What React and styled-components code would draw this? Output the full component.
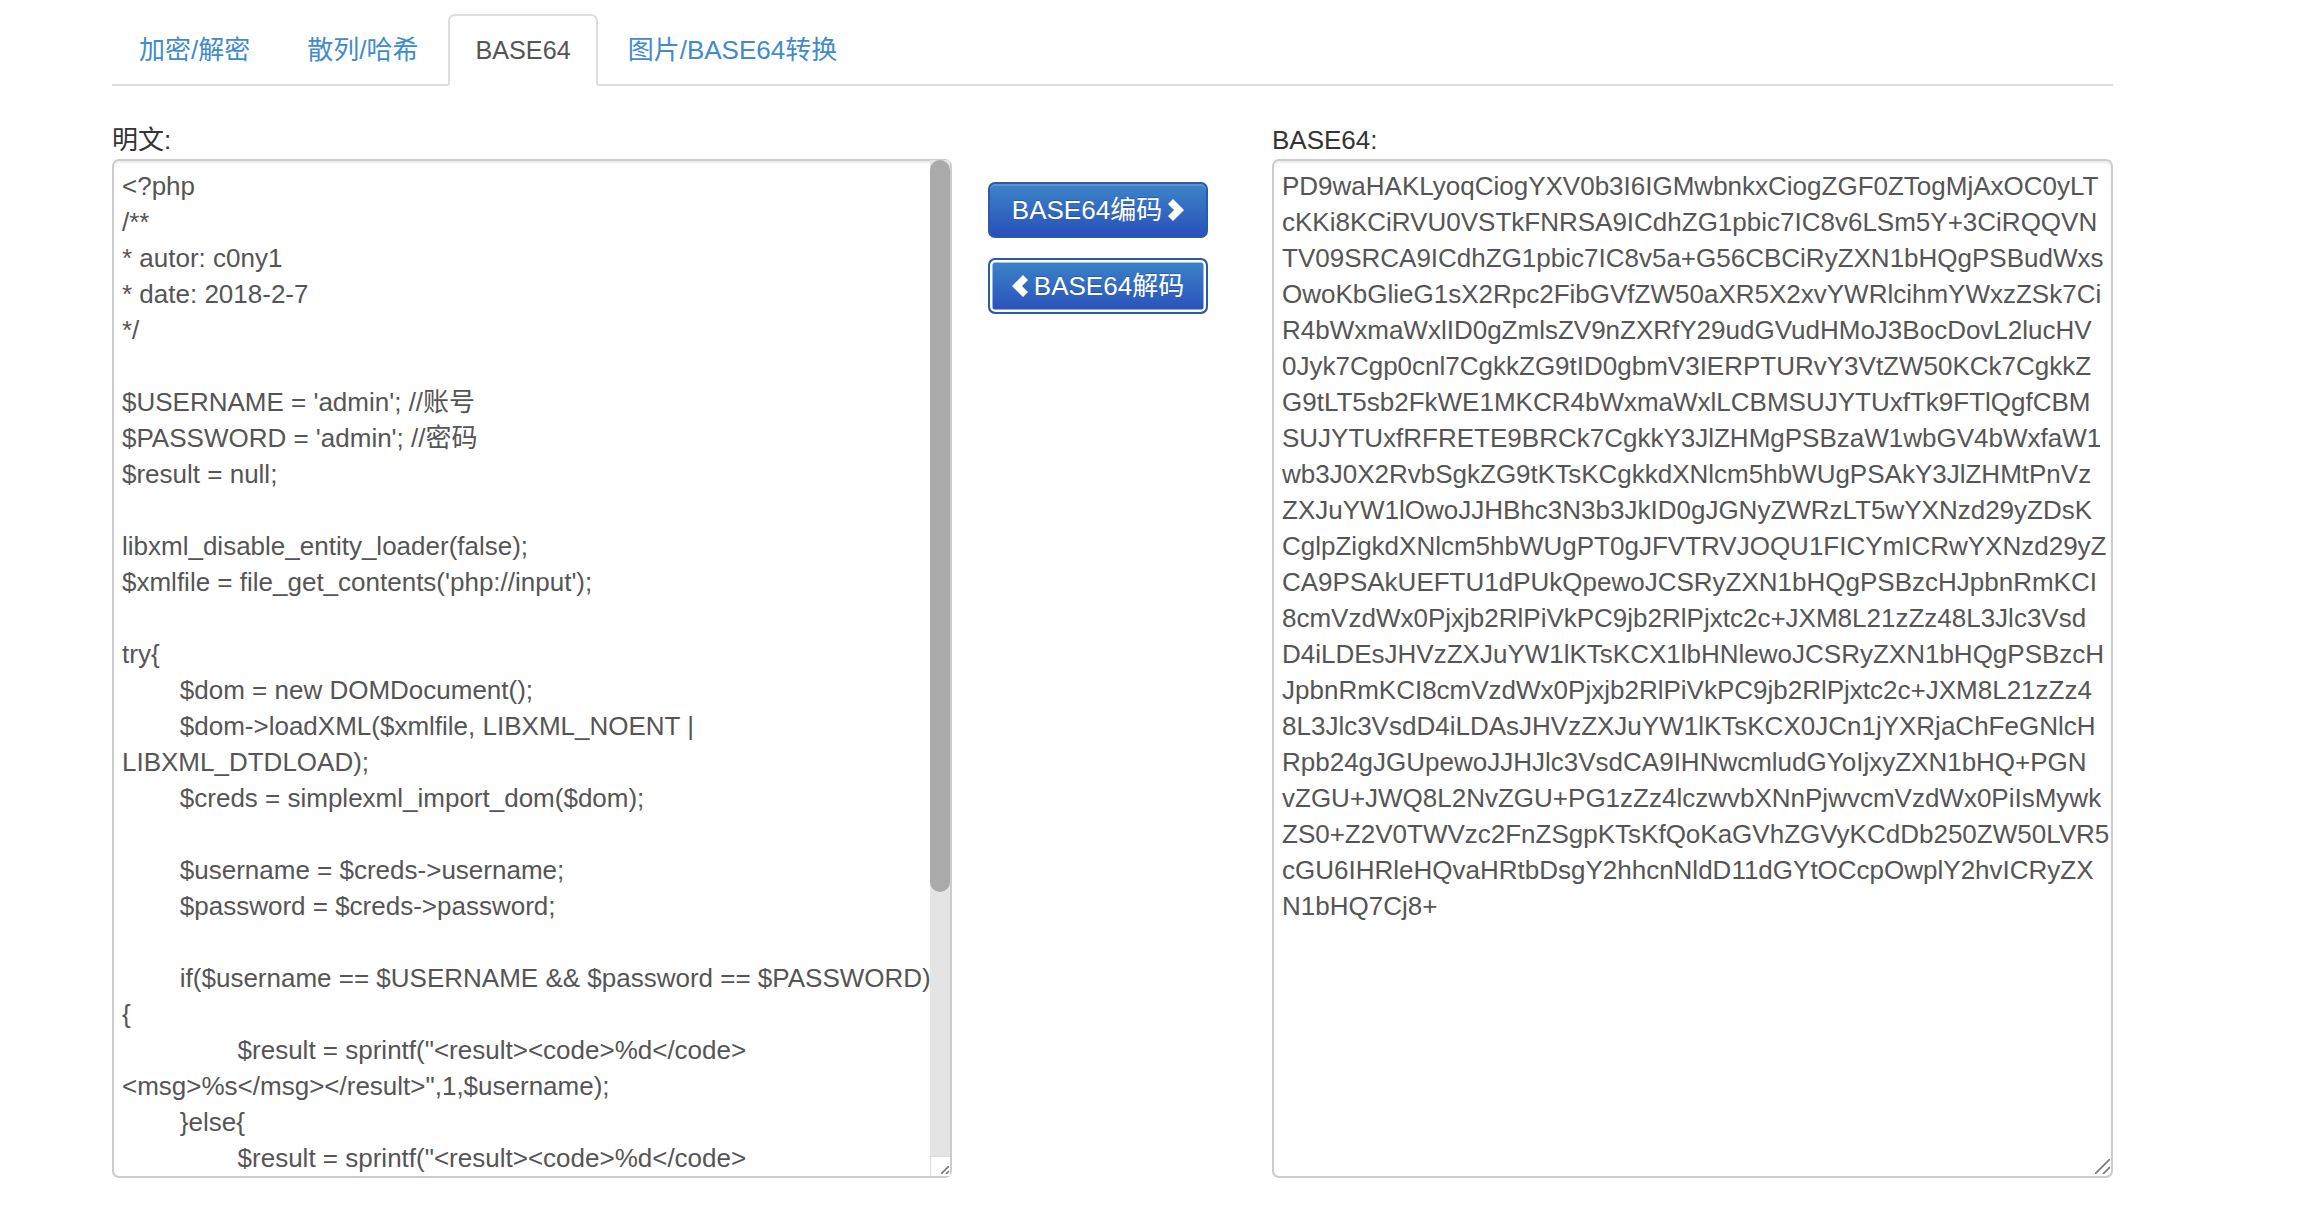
import React from "react"
import styled, { createGlobalStyle, css } from "styled-components"

const GlobalStyle = createGlobalStyle`
    html, body {
        margin: 0;
        padding: 0;
        background: #fff;
        overflow: hidden;
    }
    body {
        font-family: "Liberation Sans", "Noto Sans CJK SC", sans-serif;
        font-size: 26px;
        line-height: 36px;
        color: #333;
    }
`

const Page = styled.div`
    width: 2001px;
    padding: 14px 0 0 112px;
`

const TabBar = styled.ul`
    display: flex;
    list-style: none;
    margin: 0 0 36px;
    padding: 0;
    height: 70px;
    border-bottom: 2px solid #ddd;
`

const Tab = styled.li`
    box-sizing: border-box;
    height: 72px;
    margin-right: 3px;
    padding: 16px 25px;
    border: 2px solid transparent;
    border-radius: 7px 7px 0 0;
    color: #428bca;

    ${({ $active }) =>
        $active &&
        css`
            background: #fff;
            color: #555;
            font-size: 25.2px;
            border-color: #ddd;
            border-bottom-color: #fff;
        `}
`

const Columns = styled.div`
    display: grid;
    grid-template-columns: 840px 1fr 841px;
`

const Label = styled.label`
    display: block;
    height: 37px;
    line-height: 37px;
`

const BoxWrap = styled.div`
    position: relative;
    height: 1019px;
`

const TextBox = styled.textarea`
    display: block;
    box-sizing: border-box;
    width: 100%;
    height: 100%;
    margin: 0;
    padding: 7px 8px 0;
    border: 2px solid #ccc;
    border-radius: 7px;
    outline: none;
    background: #fff;
    box-shadow: inset 0 2px 2px rgba(0, 0, 0, 0.075);
    color: #555;
    font: inherit;
    line-height: 36px;
    white-space: pre;
    tab-size: 8;
    resize: none;
    overflow: hidden;
`

// the browser hides real scrollbars in the photo, so this one lies over the textarea
const ScrollTrack = styled.div`
    position: absolute;
    top: 1px;
    right: 2px;
    bottom: 2px;
    display: flex;
    flex-direction: column;
    width: 20px;
    background: #e4e4e4;
`

const ScrollThumb = styled.div`
    height: 732px;
    background: #aaa;
    border-radius: 10px;
`

const ScrollCorner = styled.div`
    box-sizing: border-box;
    width: 20px;
    height: 20px;
    margin-top: auto;
    border-top: 1px solid #ddd;
    border-left: 1px solid #ddd;
    background: #fff;
`

const Grip = styled.svg`
    position: absolute;
    right: 3px;
    bottom: 4px;
    stroke: #777;
    stroke-width: 1.6;
    fill: none;
`

const ButtonColumn = styled.div`
    display: flex;
    flex-direction: column;
    gap: 20px;
    padding: 60px 0 0 36px;
`

const ConvertButton = styled.button`
    display: flex;
    align-items: center;
    justify-content: center;
    gap: 6px;
    box-sizing: border-box;
    width: 220px;
    height: 56px;
    padding: 0;
    border: 2px solid #2a5aa8;
    border-radius: 7px;
    background: linear-gradient(to bottom, #3d84c8 0%, #2950bb 100%);
    box-shadow: inset 0 2px 0 rgba(255, 255, 255, 0.15);
    color: #fff;
    font: inherit;
    text-shadow: 0 -1px 0 rgba(0, 0, 0, 0.2);

    ${({ $focused }) =>
        $focused &&
        css`
            box-shadow: inset 0 0 0 2.5px #fff;
        `}
`

const ChevronIcon = ({ flip }) => (
    <svg width="16" height="22" viewBox="0 0 16 22" fill="#fff">
        <polygon
            points={flip ? "16,5 11,0 0,11 11,22 16,17 10,11" : "0,5 5,0 16,11 5,22 0,17 6,11"}
        />
    </svg>
)

const SmallGrip = () => (
    <Grip width="8" height="8" viewBox="0 0 8 8">
        <path d="M0 8 L8 0 M5 8 L8 5" />
    </Grip>
)

const LargeGrip = () => (
    <Grip width="15" height="15" viewBox="0 0 15 15">
        <path d="M0 15 L15 0 M8 15 L15 8" />
    </Grip>
)

const PLAIN_TEXT = [
    "<?php",
    "/**",
    "* autor: c0ny1",
    "* date: 2018-2-7",
    "*/",
    "",
    "$USERNAME = 'admin'; //账号",
    "$PASSWORD = 'admin'; //密码",
    "$result = null;",
    "",
    "libxml_disable_entity_loader(false);",
    "$xmlfile = file_get_contents('php://input');",
    "",
    "try{",
    "\t$dom = new DOMDocument();",
    "\t$dom->loadXML($xmlfile, LIBXML_NOENT |",
    "LIBXML_DTDLOAD);",
    "\t$creds = simplexml_import_dom($dom);",
    "",
    "\t$username = $creds->username;",
    "\t$password = $creds->password;",
    "",
    "\tif($username == $USERNAME && $password == $PASSWORD)",
    "{",
    '\t\t$result = sprintf("<result><code>%d</code>',
    '<msg>%s</msg></result>",1,$username);',
    "\t}else{",
    '\t\t$result = sprintf("<result><code>%d</code>',
    '<msg>%s</msg></result>",0,$username);',
    "\t}\t",
    "}catch(Exception $e){",
    '\t$result = sprintf("<result><code>%d</code><msg>%s</msg>',
    '</result>",3,$e->getMessage());',
    "}",
    "",
    "header('Content-Type: text/html; charset=utf-8');",
    "echo $result;",
    "?>",
].join("\n")

const BASE64_TEXT = [
    "PD9waHAKLyoqCiogYXV0b3I6IGMwbnkxCiogZGF0ZTogMjAxOC0yLT",
    "cKKi8KCiRVU0VSTkFNRSA9ICdhZG1pbic7IC8v6LSm5Y+3CiRQQVN",
    "TV09SRCA9ICdhZG1pbic7IC8v5a+G56CBCiRyZXN1bHQgPSBudWxs",
    "OwoKbGlieG1sX2Rpc2FibGVfZW50aXR5X2xvYWRlcihmYWxzZSk7Ci",
    "R4bWxmaWxlID0gZmlsZV9nZXRfY29udGVudHMoJ3BocDovL2lucHV",
    "0Jyk7Cgp0cnl7CgkkZG9tID0gbmV3IERPTURvY3VtZW50KCk7CgkkZ",
    "G9tLT5sb2FkWE1MKCR4bWxmaWxlLCBMSUJYTUxfTk9FTlQgfCBM",
    "SUJYTUxfRFRETE9BRCk7CgkkY3JlZHMgPSBzaW1wbGV4bWxfaW1",
    "wb3J0X2RvbSgkZG9tKTsKCgkkdXNlcm5hbWUgPSAkY3JlZHMtPnVz",
    "ZXJuYW1lOwoJJHBhc3N3b3JkID0gJGNyZWRzLT5wYXNzd29yZDsK",
    "CglpZigkdXNlcm5hbWUgPT0gJFVTRVJOQU1FICYmICRwYXNzd29yZ",
    "CA9PSAkUEFTU1dPUkQpewoJCSRyZXN1bHQgPSBzcHJpbnRmKCI",
    "8cmVzdWx0Pjxjb2RlPiVkPC9jb2RlPjxtc2c+JXM8L21zZz48L3Jlc3Vsd",
    "D4iLDEsJHVzZXJuYW1lKTsKCX1lbHNlewoJCSRyZXN1bHQgPSBzcH",
    "JpbnRmKCI8cmVzdWx0Pjxjb2RlPiVkPC9jb2RlPjxtc2c+JXM8L21zZz4",
    "8L3Jlc3VsdD4iLDAsJHVzZXJuYW1lKTsKCX0JCn1jYXRjaChFeGNlcH",
    "Rpb24gJGUpewoJJHJlc3VsdCA9IHNwcmludGYoIjxyZXN1bHQ+PGN",
    "vZGU+JWQ8L2NvZGU+PG1zZz4lczwvbXNnPjwvcmVzdWx0PiIsMywk",
    "ZS0+Z2V0TWVzc2FnZSgpKTsKfQoKaGVhZGVyKCdDb250ZW50LVR5",
    "cGU6IHRleHQvaHRtbDsgY2hhcnNldD11dGYtOCcpOwplY2hvICRyZX",
    "N1bHQ7Cj8+",
].join("\n")

const TABS = ["加密/解密", "散列/哈希", "BASE64", "图片/BASE64转换"]

const App = () => (
    <Page>
        <GlobalStyle />
        <TabBar>
            {TABS.map((name) => (
                <Tab key={name} $active={name === "BASE64"}>
                    {name}
                </Tab>
            ))}
        </TabBar>
        <Columns>
            <div>
                <Label>明文:</Label>
                <BoxWrap>
                    <TextBox readOnly value={PLAIN_TEXT} />
                    <ScrollTrack>
                        <ScrollThumb />
                        <ScrollCorner />
                    </ScrollTrack>
                    <SmallGrip />
                </BoxWrap>
            </div>
            <ButtonColumn>
                <ConvertButton>
                    BASE64编码
                    <ChevronIcon />
                </ConvertButton>
                <ConvertButton $focused>
                    <ChevronIcon flip />
                    BASE64解码
                </ConvertButton>
            </ButtonColumn>
            <div>
                <Label>BASE64:</Label>
                <BoxWrap>
                    <TextBox readOnly value={BASE64_TEXT} />
                    <LargeGrip />
                </BoxWrap>
            </div>
        </Columns>
    </Page>
)

export default App
